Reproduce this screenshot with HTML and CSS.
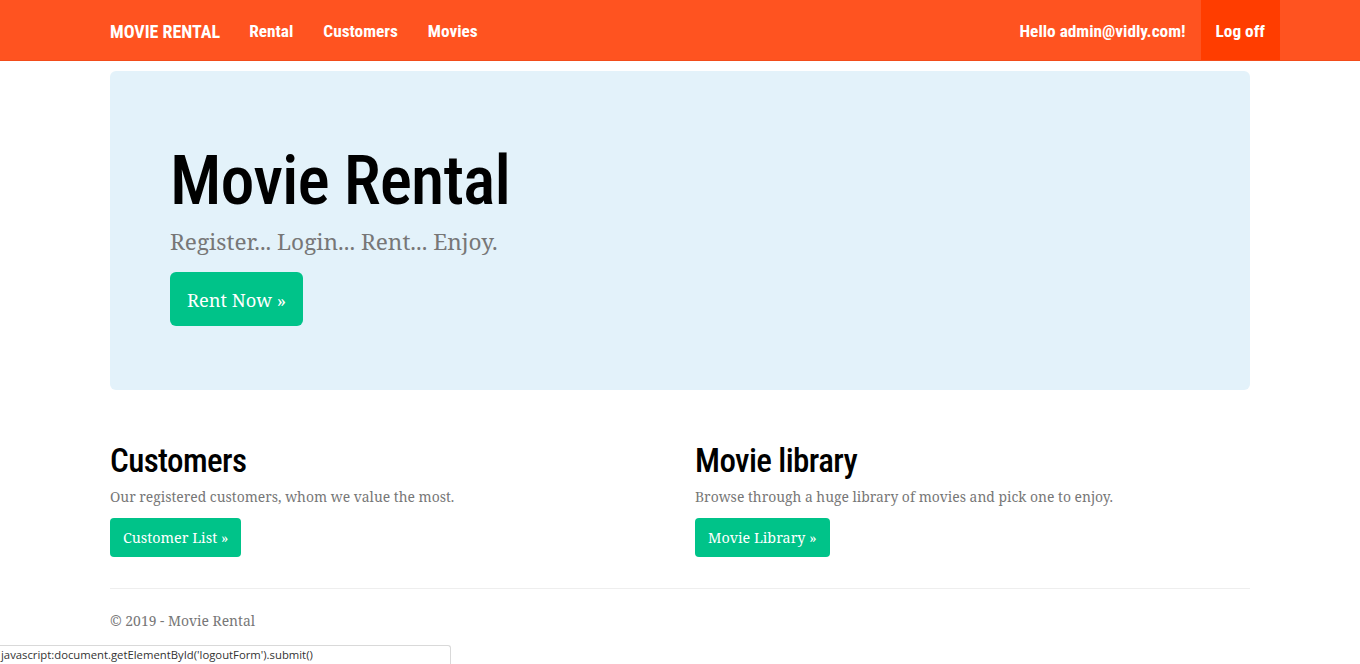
FILE: index.html
```html
<!DOCTYPE html>
<html lang="en">
<head>
<meta charset="utf-8">
<title>Home Page - Movie Rental</title>
<link rel="stylesheet" href="styles.css">
</head>
<body>
<nav class="navbar">
  <div class="container nav-inner">
    <div class="nav-left">
      <a class="brand" href="#">MOVIE RENTAL</a>
      <a class="nav-link" href="#">Rental</a>
      <a class="nav-link" href="#">Customers</a>
      <a class="nav-link" href="#">Movies</a>
    </div>
    <div class="nav-right">
      <a class="nav-link" href="#">Hello admin@vidly.com!</a>
      <a class="nav-link active" href="#">Log off</a>
    </div>
  </div>
</nav>

<main class="container">
  <section class="jumbotron">
    <h1>Movie Rental</h1>
    <p class="lead">Register... Login... Rent... Enjoy.</p>
    <a class="btn btn-lg" href="#">Rent Now &raquo;</a>
  </section>

  <section class="cols">
    <div class="col">
      <h2>Customers</h2>
      <p class="muted">Our registered customers, whom we value the most.</p>
      <a class="btn" href="#">Customer List &raquo;</a>
    </div>
    <div class="col">
      <h2>Movie library</h2>
      <p class="muted">Browse through a huge library of movies and pick one to enjoy.</p>
      <a class="btn" href="#">Movie Library &raquo;</a>
    </div>
  </section>

  <hr class="rule">
  <footer class="footer">
    <p>&copy; 2019 - Movie Rental</p>
  </footer>
</main>

<div class="statusbar">javascript:document.getElementById('logoutForm').submit()</div>
</body>
</html>
```
FILE: styles.css
```css
* { box-sizing: border-box; }
html, body { margin: 0; padding: 0; }
body {
  font-family: "Noto Serif", "DejaVu Serif", Georgia, serif;
  font-size: 13.9px;
  color: #777;
  background: #fff;
  width: 1360px;
  height: 664px;
  overflow: hidden;
}
a { text-decoration: none; }

.container {
  width: 1140px;
  margin: 0 auto;
}

/* Navbar */
.navbar {
  background: #ff5320;
  height: 61px;
  border-bottom: 1px solid #f24c1a;
}
.nav-inner {
  display: flex;
  justify-content: space-between;
  height: 60px;
}
.nav-left, .nav-right {
  display: flex;
  align-items: stretch;
}
.navbar a {
  font-family: "Roboto Condensed", "Open Sans Condensed", sans-serif;
  font-weight: 700;
  font-size: 17.3px;
  color: #fff;
  display: flex;
  align-items: center;
  height: 60px;
  padding-top: 2px;
}
.navbar .brand { font-size: 18px; margin-right: 29px; }
.nav-left .nav-link { padding-left: 15px; padding-right: 15px; }
.nav-left .brand + .nav-link { padding-left: 0; }
.nav-right .nav-link { padding-left: 15px; padding-right: 15px; }
.nav-right .active {
  background: #ff3d00;
  margin-right: -30px;
}

/* Jumbotron */
.jumbotron {
  margin-top: 10px;
  background: #e3f2fa;
  border-radius: 6px;
  padding: 76px 60px 0;
  height: 319px;
}
.jumbotron h1 {
  font-family: "Roboto Condensed", "Open Sans Condensed", sans-serif;
  font-weight: 500;
  font-size: 68px;
  line-height: 1;
  color: #000;
  margin: 0 0 13px;
  letter-spacing: -0.9px;
}
.lead {
  font-size: 22.6px;
  line-height: 28px;
  margin: 0 0 16px;
  color: #777;
}

/* Buttons */
.btn {
  display: inline-flex;
  align-items: center;
  justify-content: center;
  background: #00c389;
  color: #fff;
  border-radius: 4px;
  font-size: 14.3px;
  height: 39px;
  padding: 0 13px;
}
.btn-lg {
  font-size: 18.3px;
  height: 54px;
  padding: 0 17px;
  border-radius: 6px;
}

/* Columns */
.cols {
  display: grid;
  grid-template-columns: 585px 555px;
  margin-top: 51px;
}
.col h2 {
  font-family: "Roboto Condensed", "Open Sans Condensed", sans-serif;
  font-weight: 500;
  font-size: 33px;
  line-height: 40px;
  color: #000;
  margin: 0 0 5px;
  letter-spacing: -0.6px;
}
.col .muted {
  margin: 0 0 10px;
  line-height: 22px;
}

.rule {
  border: 0;
  border-top: 1px solid #eee;
  margin: 31px 0 0;
}
.footer p {
  margin: 21px 0 0;
  line-height: 22px;
}

/* Browser status bar overlay */
.statusbar {
  position: fixed;
  left: 0;
  bottom: 0;
  width: 451px;
  height: 19px;
  background: #fff;
  border: 1px solid #d9d9d9;
  border-left: 0;
  border-bottom: 0;
  border-top-right-radius: 3px;
  font-family: "Open Sans", "DejaVu Sans", sans-serif;
  font-size: 11.3px;
  line-height: 18px;
  color: #333;
  padding-left: 1px;
  white-space: nowrap;
}
```
